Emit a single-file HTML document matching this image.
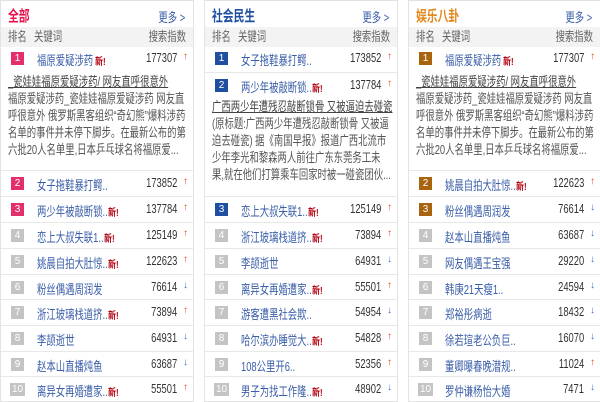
<!DOCTYPE html>
<html><head><meta charset="utf-8"><style>
*{margin:0;padding:0;box-sizing:border-box}
body{width:600px;height:400px;background:#fff;font-family:"Liberation Sans","Noto Sans CJK SC",sans-serif;font-size:13px;color:#333;position:relative;overflow:hidden}
.p{position:absolute;top:0;height:402px;border:1px solid #e3e3e3;background:#fff}
.s{transform:scaleX(0.72);transform-origin:left center}
.sr{transform:scaleX(0.72);transform-origin:right center}
.t{position:absolute;left:7px;top:4px;font-size:15px;font-weight:bold;transform:scaleX(0.72);transform-origin:left}
.more{position:absolute;right:8px;top:6px;font-size:13px;color:#3a5ea8}
.h{position:absolute;left:0;right:0;top:26px;height:20px;background:#f3f3f3;color:#666;line-height:20px}
.h .a{position:absolute;left:7px}.h .b{position:absolute;left:33px}.h .c{position:absolute;right:7px}
.r{position:absolute;left:0;right:0;height:26px;border-top:1px solid #e8e8e8}
.bd{position:absolute;left:10px;top:6px;width:13px;height:13px;color:#fff;font-size:10px;line-height:13px;text-align:center;background:#c4c4c4}
.bd.w{width:15px;left:9px}
.k{position:absolute;left:36px;top:4px;color:#3a5ea8;white-space:nowrap}
.n{position:absolute;color:#b3000f;font-size:10px;top:7px;font-weight:bold;transform:scaleX(0.8);transform-origin:left}
.v{position:absolute;right:16px;top:4px;color:#333}
.ar{position:absolute;right:5px;top:5px;font-size:10px;font-weight:bold}
.up{color:#e8471a}.dn{color:#3a6fd0}
.d{position:absolute;left:7px;white-space:nowrap;color:#555;line-height:17px;font-size:13px;transform:scaleX(0.72);transform-origin:left top}
.d u{color:#444}
</style></head><body>

<!-- panel 1 -->
<div class="p" style="left:0;width:194px">
<div class="t" style="color:#e5124e">全部</div><div class="more sr">更多 &gt;</div>
<div class="h"><span class="a s">排名</span><span class="b s">关键词</span><span class="c sr">搜索指数</span></div>
<div class="r" style="top:45px;border-top:0"><div class="bd" style="background:#e3306c">1</div><div class="k s">福原爱疑涉药</div><span class="n" style="left:94px">新!</span><div class="v sr">177307</div><div class="ar up">↑</div></div>
<div class="d" style="top:72px"><u>_瓷娃娃福原爱疑涉药/ 网友直呼很意外</u><br>福原爱疑涉药_瓷娃娃福原爱疑涉药 网友直<br>呼很意外 俄罗斯黑客组织“奇幻熊”爆料涉药<br>名单的事件并未停下脚步。在最新公布的第<br>六批20人名单里,日本乒乓球名将福原爱...</div>
<div class="r" style="top:169px"><div class="bd" style="background:#e3306c">2</div><div class="k s">女子拖鞋暴打鳄..</div><div class="v sr">173852</div><div class="ar up">↑</div></div>
<div class="r" style="top:195px"><div class="bd" style="background:#e3306c">3</div><div class="k s">两少年被敲断锁..</div><span class="n" style="left:107px">新!</span><div class="v sr">137784</div><div class="ar up">↑</div></div>
<div class="r" style="top:221px"><div class="bd">4</div><div class="k s">恋上大叔失联1..</div><span class="n" style="left:103px">新!</span><div class="v sr">125149</div><div class="ar up">↑</div></div>
<div class="r" style="top:247px"><div class="bd">5</div><div class="k s">姚晨自拍大肚惊..</div><span class="n" style="left:107px">新!</span><div class="v sr">122623</div><div class="ar up">↑</div></div>
<div class="r" style="top:273px"><div class="bd">6</div><div class="k s">粉丝偶遇周润发</div><div class="v sr">76614</div><div class="ar dn">↓</div></div>
<div class="r" style="top:298px"><div class="bd">7</div><div class="k s">浙江玻璃栈道挤..</div><span class="n" style="left:107px">新!</span><div class="v sr">73894</div><div class="ar up">↑</div></div>
<div class="r" style="top:324px"><div class="bd">8</div><div class="k s">李颉逝世</div><div class="v sr">64931</div><div class="ar dn">↓</div></div>
<div class="r" style="top:350px"><div class="bd">9</div><div class="k s">赵本山直播炖鱼</div><div class="v sr">63687</div><div class="ar dn">↓</div></div>
<div class="r" style="top:375px"><div class="bd w">10</div><div class="k s">离异女再婚遭家..</div><span class="n" style="left:107px">新!</span><div class="v sr">55501</div><div class="ar up">↑</div></div>
</div>

<!-- panel 2 -->
<div class="p" style="left:204px;width:194px">
<div class="t" style="color:#1f4fa0">社会民生</div><div class="more sr">更多 &gt;</div>
<div class="h"><span class="a s">排名</span><span class="b s">关键词</span><span class="c sr">搜索指数</span></div>
<div class="r" style="top:45px;border-top:0"><div class="bd" style="background:#1f4fa0">1</div><div class="k s">女子拖鞋暴打鳄..</div><div class="v sr">173852</div><div class="ar up">↑</div></div>
<div class="r" style="top:71px"><div class="bd" style="background:#1f4fa0">2</div><div class="k s">两少年被敲断锁..</div><span class="n" style="left:107px">新!</span><div class="v sr">137784</div><div class="ar up">↑</div></div>
<div class="d" style="top:97px"><u>广西两少年遭残忍敲断锁骨 又被逼迫去碰瓷</u><br>(原标题:广西两少年遭残忍敲断锁骨 又被逼<br>迫去碰瓷) 据《南国早报》报道广西北流市<br>少年李光和黎森两人前往广东东莞务工未<br>果,就在他们打算乘车回家时被一碰瓷团伙...</div>
<div class="r" style="top:195px"><div class="bd" style="background:#1f4fa0">3</div><div class="k s">恋上大叔失联1..</div><span class="n" style="left:103px">新!</span><div class="v sr">125149</div><div class="ar up">↑</div></div>
<div class="r" style="top:221px"><div class="bd">4</div><div class="k s">浙江玻璃栈道挤..</div><span class="n" style="left:107px">新!</span><div class="v sr">73894</div><div class="ar up">↑</div></div>
<div class="r" style="top:247px"><div class="bd">5</div><div class="k s">李颉逝世</div><div class="v sr">64931</div><div class="ar dn">↓</div></div>
<div class="r" style="top:273px"><div class="bd">6</div><div class="k s">离异女再婚遭家..</div><span class="n" style="left:107px">新!</span><div class="v sr">55501</div><div class="ar up">↑</div></div>
<div class="r" style="top:298px"><div class="bd">7</div><div class="k s">游客遭黑社会欺..</div><div class="v sr">54954</div><div class="ar dn">↓</div></div>
<div class="r" style="top:324px"><div class="bd">8</div><div class="k s">哈尔滨办睡觉大..</div><span class="n" style="left:107px">新!</span><div class="v sr">54828</div><div class="ar up">↑</div></div>
<div class="r" style="top:350px"><div class="bd">9</div><div class="k s">108公里开6..</div><div class="v sr">52356</div><div class="ar up">↑</div></div>
<div class="r" style="top:375px"><div class="bd w">10</div><div class="k s">男子为找工作隆..</div><span class="n" style="left:107px">新!</span><div class="v sr">48902</div><div class="ar dn">↓</div></div>
</div>

<!-- panel 3 -->
<div class="p" style="left:408px;width:193px">
<div class="t" style="color:#e38a1f">娱乐八卦</div><div class="more sr">更多 &gt;</div>
<div class="h"><span class="a s">排名</span><span class="b s">关键词</span><span class="c sr">搜索指数</span></div>
<div class="r" style="top:45px;border-top:0"><div class="bd" style="background:#a8640f">1</div><div class="k s">福原爱疑涉药</div><span class="n" style="left:94px">新!</span><div class="v sr">177307</div><div class="ar up">↑</div></div>
<div class="d" style="top:72px"><u>_瓷娃娃福原爱疑涉药/ 网友直呼很意外</u><br>福原爱疑涉药_瓷娃娃福原爱疑涉药 网友直<br>呼很意外 俄罗斯黑客组织“奇幻熊”爆料涉药<br>名单的事件并未停下脚步。在最新公布的第<br>六批20人名单里,日本乒乓球名将福原爱...</div>
<div class="r" style="top:169px"><div class="bd" style="background:#a8640f">2</div><div class="k s">姚晨自拍大肚惊..</div><span class="n" style="left:107px">新!</span><div class="v sr">122623</div><div class="ar up">↑</div></div>
<div class="r" style="top:195px"><div class="bd" style="background:#a8640f">3</div><div class="k s">粉丝偶遇周润发</div><div class="v sr">76614</div><div class="ar dn">↓</div></div>
<div class="r" style="top:221px"><div class="bd">4</div><div class="k s">赵本山直播炖鱼</div><div class="v sr">63687</div><div class="ar dn">↓</div></div>
<div class="r" style="top:247px"><div class="bd">5</div><div class="k s">网友偶遇王宝强</div><div class="v sr">29220</div><div class="ar dn">↓</div></div>
<div class="r" style="top:273px"><div class="bd">6</div><div class="k s">韩庚21天瘦1..</div><div class="v sr">24594</div><div class="ar dn">↓</div></div>
<div class="r" style="top:298px"><div class="bd">7</div><div class="k s">郑裕彤病逝</div><div class="v sr">18432</div><div class="ar dn">↓</div></div>
<div class="r" style="top:324px"><div class="bd">8</div><div class="k s">徐若瑄老公负巨..</div><div class="v sr">16070</div><div class="ar dn">↓</div></div>
<div class="r" style="top:350px"><div class="bd">9</div><div class="k s">董卿曝春晚潜规..</div><div class="v sr">11024</div><div class="ar up">↑</div></div>
<div class="r" style="top:375px"><div class="bd w">10</div><div class="k s">罗仲谦杨怡大婚</div><div class="v sr">7471</div><div class="ar dn">↓</div></div>
</div>
</body></html>
